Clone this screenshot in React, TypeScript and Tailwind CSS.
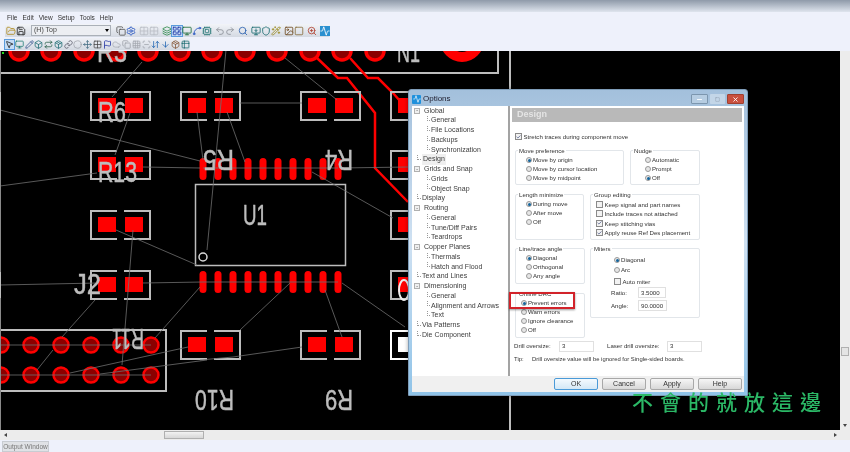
import {
  FolderOpen, Save, Copy, Settings, Grid2x2, Layers, LayoutGrid, Monitor, Spline, Cpu, Undo2, Redo2, Search,
  MonitorDown, Shield, Wand2, Image, Square, ZoomIn, Activity, MousePointer2, Pencil, Box, Repeat, Cloud, Circle,
  Move, Grid3x3, Flag, Link, ScanLine, ArrowDownUp, ArrowDown, Package, Table2, Check, Minus, X,
} from "lucide-react";

const red = "#ff0000";
const silk = "#bdbdbd";
const air = "#6e6e6e";

const ratsnest = [
  [142, 62, 112, 97], [130, 113, 115, 155], [0, 110, 200, 161], [0, 186, 97, 173], [143, 167, 200, 168],
  [197, 112, 203, 160], [116, 230, 197, 265], [133, 230, 122, 365], [0, 285, 98, 283], [143, 283, 203, 282],
  [200, 287, 155, 338], [95, 300, 62, 337], [53, 350, 37, 370], [188, 347, 70, 373], [207, 360, 100, 374],
  [0, 345, 151, 345], [0, 375, 151, 375], [226, 50, 207, 250], [227, 112, 245, 162], [240, 103, 302, 103],
  [285, 58, 337, 100], [312, 172, 393, 218], [203, 168, 338, 168], [340, 168, 408, 167], [203, 282, 338, 282],
  [290, 283, 240, 330], [325, 290, 342, 337], [342, 283, 405, 327], [302, 347, 233, 357], [233, 357, 200, 360],
];
const resistors = [
  [91, 92], [181, 92], [301, 92], [391, 92], [91, 151], [391, 151], [91, 211], [391, 211], [91, 271], [391, 271],
  [181, 331], [301, 331],
];
const pinX = [203, 218, 233, 248, 263, 278, 293, 308, 323, 338];
const topHoles = [19, 51, 84, 116, 148, 180, 212, 245, 277, 310, 342, 375];
const headerX = [1, 31, 61, 91, 121, 151];

function Resistor({ x, y, color = silk, pad = red }: { x: number; y: number; color?: string; pad?: string }) {
  return (
    <g>
      <path d={`M${x + 26} ${y}H${x}V${y + 28}H${x + 26}M${x + 33} ${y}H${x + 59}V${y + 28}H${x + 33}`} fill="none" stroke={color} strokeWidth="2" />
      <rect x={x + 7} y={y + 6} width="18" height="15" fill={pad} />
      <rect x={x + 34} y={y + 6} width="18" height="15" fill={pad} />
    </g>
  );
}

function Label({ x, y, w, t, flip }: { x: number; y: number; w: number; t: string; flip?: boolean }) {
  return (
    <text
      x={x}
      y={y + 22}
      fontSize="30"
      fill={silk}
      stroke={silk}
      strokeWidth="0.5"
      textLength={w}
      lengthAdjust="spacingAndGlyphs"
      fontFamily="Liberation Sans, sans-serif"
      transform={flip ? `rotate(180 ${x + w / 2} ${y + 11})` : undefined}
    >
      {t}
    </text>
  );
}

function Board() {
  return (
    <svg viewBox="0 51 840 379" className="block h-[379px] w-[840px] shrink-0 bg-black">
      {topHoles.map((x) => (
        <circle key={x} cx={x} cy="51" r="9" fill="#8b0000" stroke={red} strokeWidth="3.5" />
      ))}
      <circle cx="462" cy="40" r="17" fill="#000" stroke={red} strokeWidth="10" />
      <path d="M0 73H498V51M510 51V430" fill="none" stroke={silk} strokeWidth="2" />
      <path d="M317 58L338 78H347L375 113V168L408 202M350 58L368 78H378L393 93L408 110" fill="none" stroke={red} strokeWidth="2.5" />
      {resistors.map(([x, y]) => (
        <Resistor key={`${x}-${y}`} x={x} y={y} />
      ))}
      <Resistor x={391} y={331} color="#fff" pad="#fff" />
      <rect x="195.5" y="184.5" width="150" height="81" fill="none" stroke={silk} strokeWidth="1.5" />
      <circle cx="203" cy="257" r="4" fill="none" stroke="#d8d8d8" strokeWidth="1.5" />
      {pinX.map((x) => (
        <g key={x}>
          <rect x={x - 3.5} y="158" width="7" height="22" rx="3.5" fill={red} />
          <rect x={x - 3.5} y="271" width="7" height="22" rx="3.5" fill={red} />
        </g>
      ))}
      <rect x="-4" y="330" width="170" height="61" fill="none" stroke={silk} strokeWidth="2" />
      {headerX.map((x) => (
        <g key={x}>
          <circle cx={x} cy="345" r="7.5" fill="#8b0000" stroke={red} strokeWidth="2.5" />
          <circle cx={x} cy="375" r="7.5" fill="#8b0000" stroke={red} strokeWidth="2.5" />
        </g>
      ))}
      {ratsnest.map(([x1, y1, x2, y2]) => (
        <line key={`${x1}-${y1}-${x2}`} x1={x1} y1={y1} x2={x2} y2={y2} stroke={air} strokeWidth="0.8" />
      ))}
      <Label x={97} y={40} w={30} t="R3" />
      <Label x={397} y={40} w={23} t="N1" />
      <Label x={98} y={100} w={28} t="R6" />
      <Label x={98} y={160} w={39} t="R13" />
      <Label x={74} y={272} w={27} t="J2" />
      <Label x={243} y={203} w={24} t="U1" />
      <Label x={203} y={150} w={31} t="R5" flip />
      <Label x={325} y={150} w={28} t="R4" flip />
      <Label x={112} y={329} w={32} t="R11" flip />
      <Label x={195} y={390} w={39} t="R10" flip />
      <Label x={325} y={390} w={28} t="R9" flip />
      <ellipse cx="404" cy="290" rx="5" ry="10" fill="none" stroke="#eee" strokeWidth="2" />
      <rect x="2" y="52" width="2" height="2" fill="#22dd22" />
      <path d="M0.5 51V430" stroke="#8a8a8a" strokeWidth="1" />
      <path d="M0.5 92V120M0.5 272V298" stroke={silk} strokeWidth="1" />
    </svg>
  );
}

const toolRow1 = [
  { I: FolderOpen, c: "ml-[1px] text-[#b08a20]" },
  { I: Save, c: "text-[#222]" },
  { select: true, c: "ml-[5px]" },
  { I: Copy, c: "ml-[4.5px] text-[#555]" },
  { I: Settings, c: "text-[#2050c0]" },
  { I: Grid2x2, c: "ml-[3.5px] text-[#b8bcc4]" },
  { I: Grid2x2, c: "text-[#b8bcc4]" },
  { I: Layers, c: "ml-[3px] text-[#2d8a4a]" },
  { I: LayoutGrid, c: "text-[#2038a8] bg-[#c5dcf5] outline outline-1 outline-[#5a9bdc]" },
  { I: Monitor, c: "text-[#1f6e3a]" },
  { I: Spline, c: "text-[#2050c0]" },
  { I: Cpu, c: "text-[#2a7a78]" },
  { I: Undo2, c: "ml-[3px] text-[#8a8f98]" },
  { I: Redo2, c: "text-[#8a8f98]" },
  { I: Search, c: "ml-[3px] text-[#2a60b0]" },
  { I: MonitorDown, c: "ml-[3px] text-[#186a70]" },
  { I: Shield, c: "text-[#186a70]" },
  { I: Wand2, c: "text-[#9a8a20]" },
  { I: Image, c: "ml-[3px] text-[#704a20]" },
  { I: Square, c: "text-[#8a7040]" },
  { I: ZoomIn, c: "ml-[3px] text-[#b04030]" },
  { I: Activity, c: "ml-[3px] text-white bg-[#2a90d0]" },
];

const toolRow2 = [
  { I: MousePointer2, c: "text-[#111] bg-[#c5dcf5] outline outline-1 outline-[#5a9bdc]" },
  { I: Monitor, c: "text-[#1a7a70]" },
  { I: Pencil, c: "text-[#30508a]" },
  { I: Box, c: "text-[#186a70]" },
  { I: Repeat, c: "text-[#1f5a40]" },
  { I: Package, c: "text-[#186a70]" },
  { I: Link, c: "text-[#556]" },
  { I: Circle, c: "text-[#a0a4ac]" },
  { I: Move, c: "text-[#406a80]" },
  { I: Grid2x2, c: "text-[#444]" },
  { I: Flag, c: "text-[#1a2ca0]" },
  { I: Cloud, c: "text-[#a8acb4]" },
  { I: Copy, c: "text-[#9a9ea6]" },
  { I: Grid3x3, c: "text-[#a0a4ac]" },
  { I: ScanLine, c: "text-[#a0a4ac]" },
  { I: ArrowDownUp, c: "text-[#1a60b0]" },
  { I: ArrowDown, c: "text-[#1a60b0]" },
  { I: Package, c: "text-[#805030]" },
  { I: Table2, c: "text-[#186a70]" },
];

const tree = [
  { t: "Global", box: true },
  { t: "General", sub: true },
  { t: "File Locations", sub: true },
  { t: "Backups", sub: true },
  { t: "Synchronization", sub: true },
  { t: "Design", on: true },
  { t: "Grids and Snap", box: true },
  { t: "Grids", sub: true },
  { t: "Object Snap", sub: true },
  { t: "Display" },
  { t: "Routing", box: true },
  { t: "General", sub: true },
  { t: "Tune/Diff Pairs", sub: true },
  { t: "Teardrops", sub: true },
  { t: "Copper Planes", box: true },
  { t: "Thermals", sub: true },
  { t: "Hatch and Flood", sub: true },
  { t: "Text and Lines" },
  { t: "Dimensioning", box: true },
  { t: "General", sub: true },
  { t: "Alignment and Arrows", sub: true },
  { t: "Text", sub: true },
  { t: "Via Patterns" },
  { t: "Die Component" },
];

function Radio({ t, on }: { t: string; on?: boolean }) {
  return (
    <div className="flex h-[9px] items-center gap-[1px]">
      <span className="flex h-[6px] w-[6px] shrink-0 items-center justify-center rounded-full border border-[#9a9a9a] bg-[#e6e6e6]">
        {on && <span className="h-[3px] w-[3px] rounded-full bg-[#14649c]" />}
      </span>
      <span>{t}</span>
    </div>
  );
}

function Checkbox({ t, on }: { t: string; on?: boolean }) {
  return (
    <div className="flex h-[9.5px] items-center gap-[1.5px]">
      <span className="flex h-[7px] w-[7px] shrink-0 items-center justify-center border border-[#8a8a8a] bg-[#f2f2f2]">
        {on && <Check size={6} strokeWidth={3} className="text-[#2a3a70]" />}
      </span>
      <span>{t}</span>
    </div>
  );
}

function Group({ title, className, children }: { title: string; className: string; children: React.ReactNode }) {
  return (
    <div className={`relative rounded-[2px] border border-[#e2e6ea] ${className}`}>
      <span className="absolute -top-[5px] left-[2px] bg-white px-[1px] leading-[9px]">{title}</span>
      {children}
    </div>
  );
}

function Field({ v, className }: { v: string; className: string }) {
  return <div className={`flex h-[11px] items-center border border-[#e0e0e0] bg-white pl-[2px] ${className}`}>{v}</div>;
}

function Btn({ t, primary }: { t: string; primary?: boolean }) {
  return (
    <div
      className={`flex h-[12px] w-[44px] items-center justify-center rounded-[2px] border text-[7px] ${
        primary
          ? "border-[#4a9ad8] bg-gradient-to-b from-[#f4fafe] to-[#d4e8f6]"
          : "border-[#a8a8a8] bg-gradient-to-b from-[#f6f6f6] to-[#d8d8d8]"
      }`}
    >
      {t}
    </div>
  );
}

function DesignPanel() {
  return (
    <div className="flex-1 pl-[2px] pr-[2px] pt-[2px] text-[6.1px] text-[#333]">
      <div className="flex h-[14px] items-center bg-[#b9b9b9] pl-[5px] text-[9px] font-bold text-[#e4e4e4]">Design</div>
      <div className="ml-[3px] mt-[10px]">
        <Checkbox t="Stretch traces during component move" on />
      </div>
      <div className="ml-[3px] mt-[8px] flex gap-[6px]">
        <Group title="Move preference" className="h-[35px] w-[109px] pl-[10px] pt-[5px]">
          <Radio t="Move by origin" on />
          <Radio t="Move by cursor location" />
          <Radio t="Move by midpoint" />
        </Group>
        <Group title="Nudge" className="h-[35px] w-[70px] pl-[14px] pt-[5px]">
          <Radio t="Automatic" />
          <Radio t="Prompt" />
          <Radio t="Off" on />
        </Group>
      </div>
      <div className="ml-[3px] mt-[9px] flex gap-[6px]">
        <Group title="Length minimize" className="h-[46px] w-[69px] pl-[10px] pt-[5px]">
          <Radio t="During move" on />
          <Radio t="After move" />
          <Radio t="Off" />
        </Group>
        <Group title="Group editing" className="h-[46px] w-[110px] pl-[5px] pt-[5px]">
          <Checkbox t="Keep signal and part names" />
          <Checkbox t="Include traces not attached" />
          <Checkbox t="Keep stitching vias" on />
          <Checkbox t="Apply reuse Ref Des placement" on />
        </Group>
      </div>
      <div className="ml-[3px] mt-[8px] flex gap-[5px]">
        <div className="flex w-[70px] flex-col gap-[9px]">
          <Group title="Line/trace angle" className="h-[36px] pl-[10px] pt-[5px]">
            <Radio t="Diagonal" on />
            <Radio t="Orthogonal" />
            <Radio t="Any angle" />
          </Group>
          <Group title="Online DRC" className="h-[45px] pl-[5px] pt-[5px]">
            <Radio t="Prevent errors" on />
            <Radio t="Warn errors" />
            <Radio t="Ignore clearance" />
            <Radio t="Off" />
          </Group>
        </div>
        <Group title="Miters" className="h-[70px] w-[110px]">
          <div className="pl-[23px] pt-[7px]">
            <Radio t="Diagonal" on />
            <div className="mt-[1px]">
              <Radio t="Arc" />
            </div>
            <div className="mt-[2px]">
              <Checkbox t="Auto miter" />
            </div>
          </div>
          <div className="mt-[1px] flex flex-col gap-[2px] pl-[20px]">
            <div className="flex items-center">
              <span className="w-[27px]">Ratio:</span>
              <Field v="3.5000" className="w-[28px]" />
            </div>
            <div className="flex items-center">
              <span className="w-[27px]">Angle:</span>
              <Field v="90.0000" className="w-[29px]" />
            </div>
          </div>
        </Group>
      </div>
      <div className="ml-[2px] mt-[3px] flex items-center">
        <span className="w-[45px]">Drill oversize:</span>
        <Field v="3" className="w-[35px]" />
        <span className="ml-[13px] w-[60px]">Laser drill oversize:</span>
        <Field v="3" className="w-[35px]" />
      </div>
      <div className="ml-[2px] mt-[3px] flex h-[10px] items-center text-[5.9px]">
        <span className="w-[18px]">Tip:</span>
        <span>Drill oversize value will be ignored for Single-sided boards.</span>
      </div>
    </div>
  );
}

function OptionsDialog() {
  return (
    <div className="absolute left-[408px] top-[89px] flex h-[307px] w-[340px] flex-col rounded-t-[3px] border border-[#7f9db9] bg-gradient-to-b from-[#a3c0dc] via-[#cfe1f2] to-[#8fc3e8] px-[3px] pb-[3px] shadow-[0_0_4px_rgba(0,0,0,0.35)]">
      <div className="flex h-[16px] shrink-0 items-center pt-[2px]">
        <span className="flex h-[9px] w-[9px] items-center justify-center rounded-[1px] bg-[#1e90dc]">
          <Activity size={8} className="text-white" />
        </span>
        <span className="ml-[2px] text-[8px] text-[#223]">Options</span>
        <div className="ml-auto flex h-[10px] gap-[2px]">
          <span className="flex w-[17px] items-center justify-center rounded-[1px] border border-[#7c96ae] bg-[#b6cde2]">
            <Minus size={7} strokeWidth={3} className="text-white" />
          </span>
          <span className="flex w-[15px] items-center justify-center rounded-[1px] bg-[#c3d6e8]">
            <Square size={5} className="text-[#8a9aaa]" />
          </span>
          <span className="flex w-[17px] items-center justify-center rounded-[1px] border border-[#a04030] bg-[#c9503f]">
            <X size={7} strokeWidth={3} className="text-white" />
          </span>
        </div>
      </div>
      <div className="flex min-h-0 flex-1 bg-white">
        <div className="w-[98px] shrink-0 border-r-2 border-[#a3a3a3] text-[7px] text-[#3c3c3c]">
          {tree.map((n, i) => (
            <div key={i} className={`flex h-[9.75px] items-center ${n.sub ? "pl-[15px]" : "pl-[2px]"}`}>
              {n.box ? (
                <span className="flex h-[6px] w-[6px] shrink-0 items-center justify-center border border-[#b0b0b0] bg-[#f0f0f0] text-[5px] leading-none">-</span>
              ) : (
                <span className={`h-[5px] shrink-0 -translate-y-[2px] border-b border-l border-dotted border-[#999] ${n.sub ? "w-[3px]" : "ml-[3px] w-[4px]"}`} />
              )}
              <span className={`${n.box ? "ml-[4px]" : "ml-[1px]"} ${n.on ? "bg-[#efefef] px-[1px]" : ""}`}>{n.t}</span>
            </div>
          ))}
        </div>
        <DesignPanel />
      </div>
      <div className="flex h-[16px] shrink-0 items-center justify-end gap-[4px] bg-[#f0f0f0] pr-[2px] text-[#333]">
        <Btn t="OK" primary />
        <Btn t="Cancel" />
        <Btn t="Apply" />
        <Btn t="Help" />
      </div>
      <div className="pointer-events-none absolute left-[100px] top-[202px] h-[17px] w-[66px] border-2 border-[#d2232a] shadow-[0_1px_2px_rgba(0,0,0,0.4)]" />
    </div>
  );
}

export default function App() {
  return (
    <div className="relative flex h-[452px] w-[850px] flex-col overflow-hidden bg-[#eef1fb] font-['Liberation_Sans',sans-serif] blur-[0.35px]">
      {/* window title strip */}
      <div className="h-[12px] shrink-0 bg-gradient-to-b from-[#8f9aa9] to-[#dfe5ee]" />

      {/* menu */}
      <div className="flex h-[12px] shrink-0 items-center gap-[5px] pl-[7px] text-[6.5px] text-[#333]">
        <span>File</span>
        <span>Edit</span>
        <span>View</span>
        <span>Setup</span>
        <span>Tools</span>
        <span>Help</span>
      </div>

      {/* toolbars */}
      <div className="h-[27px] shrink-0 pl-[5px]">
        <div className="flex h-[13px] w-[325px] items-center rounded-r-[2px] bg-gradient-to-b from-[#f2f4f8] to-[#d4d9e2]">
          {toolRow1.map((b, i) =>
            b.select ? (
              <div key={i} className={`flex h-[11px] w-[80px] items-center justify-between border border-[#aab0b8] bg-[#eceef2] pl-[2px] pr-[1px] text-[7px] text-[#444] ${b.c}`}>
                <span>(H) Top</span>
                <span className="h-0 w-0 border-x-[2.5px] border-t-[3px] border-x-transparent border-t-black" />
              </div>
            ) : (
              b.I && <b.I key={i} size={10} strokeWidth={2} className={`shrink-0 ${b.c}`} />
            ),
          )}
        </div>
        <div className="mt-[1px] flex h-[12px] w-[185px] items-center rounded-r-[2px] bg-gradient-to-b from-[#eef0f5] to-[#d4d9e2]">
          {toolRow2.map((b, i) => (
            <b.I key={i} size={9} strokeWidth={2} className={`mr-[0.75px] shrink-0 ${b.c}`} />
          ))}
        </div>
      </div>

      {/* canvas + vertical scrollbar */}
      <div className="flex h-[379px] shrink-0">
        <Board />
        <div className="relative flex-1 bg-[#ececec]">
          <div className="absolute left-[1px] top-[296px] h-[9px] w-[8px] border border-[#b0b0b0] bg-[#e4e4e4]" />
          <div className="absolute left-[3px] top-[373px] h-0 w-0 border-x-[2.5px] border-t-[3px] border-x-transparent border-t-[#444]" />
        </div>
      </div>

      {/* horizontal scrollbar */}
      <div className="flex h-[10px] shrink-0 items-center bg-[#ececec] pl-[4px]">
        <span className="h-0 w-0 border-y-[2.5px] border-r-[3px] border-y-transparent border-r-[#444]" />
        <span className="ml-[157px] h-[8px] w-[40px] border border-[#b0b0b0] bg-gradient-to-b from-[#f2f2f2] to-[#d8d8d8]" />
        <span className="ml-auto mr-[13px] h-0 w-0 border-y-[2.5px] border-l-[3px] border-y-transparent border-l-[#444]" />
      </div>

      {/* output tab */}
      <div className="flex h-[12px] shrink-0 items-end pl-[2px]">
        <div className="flex h-[11px] w-[47px] items-center justify-center border border-[#c8ccd2] bg-[#e0e2e6] text-[6.5px] text-[#777]">Output Window</div>
      </div>

      <OptionsDialog />

      <div className="absolute left-[632px] top-[388px] whitespace-nowrap font-['Noto_Sans_CJK_TC',sans-serif] text-[21px] font-medium leading-[26px] tracking-[7px] text-[#2bb866]">
        不會的就放這邊
      </div>
    </div>
  );
}
